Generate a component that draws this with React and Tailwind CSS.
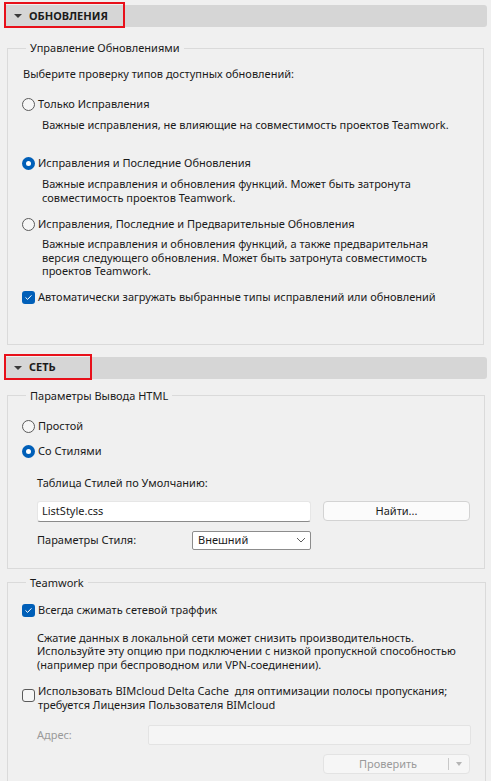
import React from "react";

function SectionHeader({ title, boxWidth }) {
  return (
    <div className="relative mx-[4px] h-[22px] bg-[#d6d6d6] rounded-[3px] flex items-center">
      <span className="ml-[10px] w-0 h-0 border-l-[4px] border-r-[4px] border-t-[4px] border-l-transparent border-r-transparent border-t-[#3a3a3a]" />
      <span className="ml-[7px] font-bold text-[11px] text-[#1b1b1b]">{title}</span>
      {/* red highlight annotation */}
      <div
        className={`absolute left-0 -top-[3px] h-[26px] border-2 border-[#e8101a] ${boxWidth}`}
      />
    </div>
  );
}

function Radio({ checked, label, className = "" }) {
  return (
    <div className={`flex items-center h-[16px] ${className}`}>
      {checked ? (
        <span className="w-[13px] h-[13px] rounded-full bg-[#005fb8] flex items-center justify-center">
          <span className="w-[5px] h-[5px] rounded-full bg-white" />
        </span>
      ) : (
        <span className="w-[13px] h-[13px] rounded-full border border-[#5a5a5a] bg-[#f6f6f6]" />
      )}
      <span className="ml-[3px]">{label}</span>
    </div>
  );
}

function CheckMark() {
  return (
    <span className="w-[13px] h-[13px] rounded-[3px] bg-[#005fb8] flex items-center justify-center shrink-0">
      <svg width="9" height="9" viewBox="0 0 9 9" fill="none">
        <path d="M1.8 4.7 L3.6 6.4 L7.2 2.6" stroke="white" strokeWidth="1" strokeLinecap="round" strokeLinejoin="round" />
      </svg>
    </span>
  );
}

function Group({ legend, className = "", children }) {
  return (
    <fieldset className={`mx-[7px] border border-[#dadada] px-[14px] ${className}`}>
      <legend className="ml-[4px] px-[4px] leading-[16px]">{legend}</legend>
      {children}
    </fieldset>
  );
}

export default function App() {
  return (
    <div className="w-[491px] h-[781px] overflow-hidden whitespace-nowrap bg-[#f0f0f0] text-[11px] text-[#1a1a1a] font-['Noto_Sans',sans-serif] pt-[5px]">
      <SectionHeader title="ОБНОВЛЕНИЯ" boxWidth="w-[121px]" />

      <Group legend="Управление Обновлениями" className="mt-[13px] pb-[38px]">
        <div className="mt-[10px] leading-[16px] ml-[1px]">Выберите проверку типов доступных обновлений:</div>

        <Radio className="mt-[14px]" label="Только Исправления" />
        <div className="mt-[6px] ml-[20px] leading-[14px]">
          Важные исправления, не влияющие на совместимость проектов Teamwork.
        </div>

        <Radio className="mt-[23px]" checked label="Исправления и Последние Обновления" />
        <div className="mt-[6px] ml-[20px] leading-[14px]">
          Важные исправления и обновления функций. Может быть затронута
          <br />
          совместимость проектов Teamwork.
        </div>

        <Radio className="mt-[11px]" label="Исправления, Последние и Предварительные Обновления" />
        <div className="mt-[5px] ml-[20px] leading-[13.5px]">
          Важные исправления и обновления функций, а также предварительная
          <br />
          версия следующего обновления. Может быть затронута совместимость
          <br />
          проектов Teamwork.
        </div>

        <div className="mt-[12px] flex items-center h-[16px]">
          <CheckMark />
          <span className="ml-[3px]">Автоматически загружать выбранные типы исправлений или обновлений</span>
        </div>
      </Group>

      <div className="mt-[12px]">
        <SectionHeader title="СЕТЬ" boxWidth="w-[88px]" />
      </div>

      <Group legend="Параметры Вывода HTML" className="mt-[9px] pb-[18px]">
        <Radio className="mt-[15px]" label="Простой" />
        <Radio className="mt-[9px]" checked label="Со Стилями" />

        <div className="mt-[15px] ml-[15px] leading-[16px]">Таблица Стилей по Умолчанию:</div>

        <div className="mt-[10px] ml-[15px] flex items-center gap-[12px]">
          <div className="w-[274px] h-[21px] bg-white border border-[#e6e6e6] border-b-[#8a8a8a] rounded-[3px] flex items-center px-[4px]">
            ListStyle.css
          </div>
          <div className="w-[147px] h-[20px] bg-[#fbfbfb] border border-[#d3d3d3] rounded-[4px] flex items-center justify-center">
            Найти...
          </div>
        </div>

        <div className="mt-[9px] ml-[15px] flex items-center">
          <span className="w-[155px]">Параметры Стиля:</span>
          <div className="w-[119px] h-[19px] bg-white border border-[#8c8c8c] rounded-[2px] flex items-center justify-between pl-[5px] pr-[4px]">
            <span>Внешний</span>
            <svg width="10" height="6" viewBox="0 0 10 6" fill="none">
              <path d="M1 1 L5 5 L9 1" stroke="#5c5c5c" strokeWidth="1" />
            </svg>
          </div>
        </div>
      </Group>

      <Group legend="Teamwork" className="mt-[6px] pb-[20px]">
        <div className="mt-[12px] flex items-center h-[16px]">
          <CheckMark />
          <span className="ml-[3px]">Всегда сжимать сетевой траффик</span>
        </div>

        <div className="mt-[12px] ml-[15px] leading-[13.5px]">
          Сжатие данных в локальной сети может снизить производительность.
          <br />
          Используйте эту опцию при подключении с низкой пропускной способностью
          <br />
          (например при беспроводном или VPN-соединении).
        </div>

        <div className="mt-[13px] flex items-start">
          <span className="mt-[5px] w-[13px] h-[13px] rounded-[3px] border border-[#5a5a5a] bg-[#f6f6f6] shrink-0" />
          <span className="ml-[3px] leading-[13.5px]">
            Использовать BIMcloud Delta Cache&nbsp; для оптимизации полосы пропускания;
            <br />
            требуется Лицензия Пользователя BIMcloud
          </span>
        </div>

        <div className="mt-[14px] ml-[15px] flex items-center">
          <span className="w-[111px] text-[#9a9a9a]">Адрес:</span>
          <div className="w-[323px] h-[20px] bg-[#f5f5f5] border border-[#e3e3e3] rounded-[2px]" />
        </div>

        <div className="mt-[9px] ml-[301px] w-[147px] h-[20px] bg-[#f6f6f6] border border-[#e3e3e3] rounded-[4px] flex items-center text-[#9a9a9a]">
          <span className="flex-1 text-center pl-[4px]">Проверить</span>
          <span className="w-px h-[12px] bg-[#c8c8c8]" />
          <span className="w-[20px] flex justify-center">
            <span className="w-0 h-0 border-l-[3.5px] border-r-[3.5px] border-t-[4px] border-l-transparent border-r-transparent border-t-[#b5b5b5]" />
          </span>
        </div>
      </Group>
    </div>
  );
}
